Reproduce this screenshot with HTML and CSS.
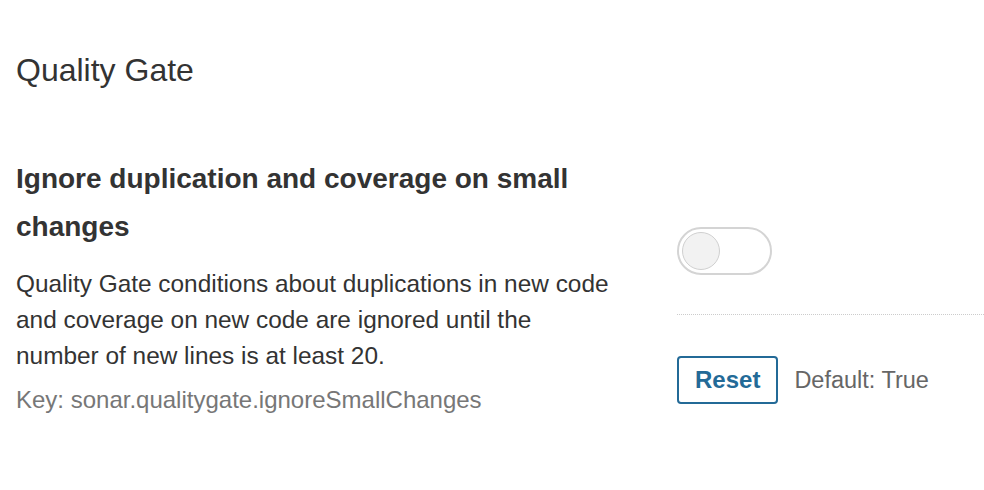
FILE: index.html
```html
<!DOCTYPE html>
<html lang="en">
<head>
    <meta charset="UTF-8">
    <title>Quality Gate</title>
    <link rel="stylesheet" href="styles.css">
</head>
<body>
    <h2 class="section-title">Quality Gate</h2>

    <div class="setting">
        <div class="setting-info">
            <h3 class="setting-name">Ignore duplication and coverage on small changes</h3>
            <p class="setting-desc">Quality Gate conditions about duplications in new code and coverage on new code are ignored until the number of new lines is at least 20.</p>
            <div class="setting-key">Key: sonar.qualitygate.ignoreSmallChanges</div>
        </div>

        <div class="setting-value">
            <button class="switch" type="button" aria-pressed="false">
                <span class="switch-knob"></span>
            </button>
            <div class="setting-actions">
                <button class="btn-reset" type="button">Reset</button>
                <span class="default-value">Default: True</span>
            </div>
        </div>
    </div>
</body>
</html>
```

FILE: styles.css
```css
body {
    margin: 0;
    padding: 0 0 0 16px;
    font-family: "Liberation Sans", Arial, sans-serif;
    color: #333;
    background-color: #fff;
}
.section-title {
    margin: 0;
    padding-top: 52px;
    font-size: 32px;
    font-weight: normal;
    line-height: 36px;
    color: #333;
}
.setting {
    display: flex;
    margin-top: 67px;
}
.setting-info {
    width: 598px;
    flex-shrink: 0;
}
.setting-name {
    margin: 0;
    font-size: 28px;
    line-height: 48px;
    font-weight: bold;
    color: #333;
}
.setting-desc {
    margin: 15px 0 0;
    font-size: 24.4px;
    line-height: 36px;
}
.setting-key {
    margin-top: 8px;
    font-size: 24px;
    line-height: 36px;
    color: #777;
}
.setting-value {
    flex: 1;
    margin-left: 63px;
    padding-top: 72px;
}
.switch {
    display: block;
    position: relative;
    width: 95px;
    height: 48px;
    padding: 0;
    border: 2px solid #d4d4d4;
    border-radius: 24px;
    background-color: #fff;
    cursor: pointer;
}
.switch-knob {
    position: absolute;
    left: 3px;
    top: 3px;
    width: 38px;
    height: 38px;
    border-radius: 50%;
    border: 1px solid #d0d0d0;
    background-color: #f2f2f2;
    box-sizing: border-box;
}
.setting-actions {
    display: flex;
    align-items: center;
    margin-top: 39px;
    padding-top: 41px;
    border-top: 1px dotted #ccc;
}
.btn-reset {
    height: 48px;
    padding: 0 16px;
    font-family: inherit;
    font-size: 24px;
    font-weight: bold;
    color: #236a97;
    background-color: #fff;
    border: 2px solid #236a97;
    border-radius: 4px;
    cursor: pointer;
}
.default-value {
    margin-left: 16px;
    font-size: 23.5px;
    color: #666;
}
```
